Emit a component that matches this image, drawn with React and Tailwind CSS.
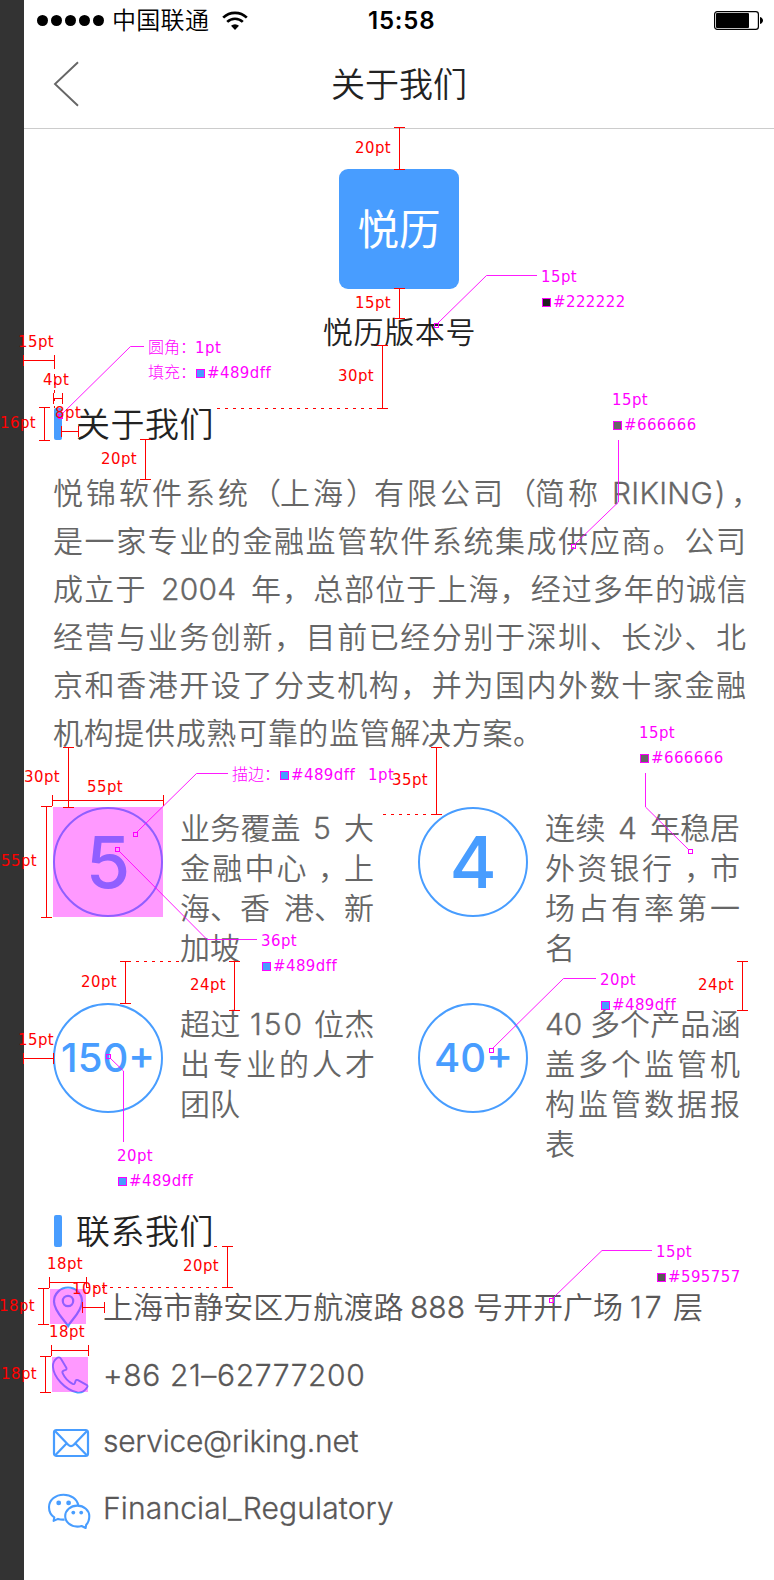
import React from "react";

/* ---------- text helpers ---------- */

// One line of body copy made of runs; each run is [classes, text].
function Line({ runs }) {
  return (
    <div className="flex whitespace-pre">
      {runs.map(([cls, text], i) => (
        <span key={i} className={"shrink-0 " + cls}>
          {text}
        </span>
      ))}
    </div>
  );
}

function StatusBar() {
  return (
    <div className="flex h-[41px] items-center text-black">
      <div className="ml-[13px] flex gap-[3px]">
        {[0, 1, 2, 3, 4].map((i) => (
          <span key={i} className="size-[11px] rounded-full bg-black" />
        ))}
      </div>
      <span className="ml-[8px] w-[98px] whitespace-nowrap pt-px text-[24px] font-[350] leading-none tracking-[0.3px]">中国联通</span>
      <svg className="ml-[12px] shrink-0" width="26" height="20" viewBox="0 0 26 20" fill="none" stroke="#000">
        <path d="M1.2 6.6A17 17 0 0 1 24.8 6.6" strokeWidth="2.7" />
        <path d="M5.2 10.9A11.2 11.2 0 0 1 20.8 10.9" strokeWidth="2.7" />
        <path d="M13 19L9 14.8A5.8 5.8 0 0 1 17 14.8Z" fill="#000" stroke="none" />
      </svg>
      <span className="ml-[120px] w-[70px] whitespace-nowrap pt-px text-[24px] font-semibold leading-none tracking-[0.8px]">15:58</span>
      <svg className="ml-[276px] shrink-0" width="50" height="19" viewBox="0 0 50 19">
        <rect x="0.6" y="0.6" width="43.8" height="17.8" rx="2.6" fill="none" stroke="#000" strokeWidth="1.2" />
        <rect x="2" y="2" width="33" height="15" rx="1" fill="#000" />
        <path d="M46 6c2 .6 3 2 3 3.500s-1 2.900-3 3.500z" fill="#000" />
      </svg>
    </div>
  );
}

function NavBar() {
  return (
    <div className="flex h-[88px] items-center border-b border-[#cccccc] text-[#222222]">
      <svg className="-mt-px ml-[29px]" width="26" height="48" viewBox="0 0 26 48" fill="none" stroke="#666" strokeWidth="1.9">
        <path d="M25 2.200L2 24L25 45.800" />
      </svg>
      <h1 className="ml-[252px] w-[137px] whitespace-nowrap text-[34px] font-[350] leading-none">关于我们</h1>
    </div>
  );
}

function SectionTitle({ children }) {
  return (
    <div className="flex h-[32px] items-center">
      <span className="ml-[1px] h-[32px] w-[8px] rounded-[2px] bg-[#489dff]" />
      <h2 className="ml-[14px] whitespace-nowrap pt-[2px] text-[34px] font-[350] leading-none tracking-[0.5px] text-[#222222]">{children}</h2>
    </div>
  );
}

const about = [
  [
    ["w-[198px] tracking-[3px]", "悦锦软件系统"],
    ["w-[29px]", "（"],
    ["w-[66px] tracking-[3px]", "上海"],
    ["w-[28px]", "）"],
    ["w-[132px] tracking-[3px]", "有限公司"],
    ["w-[29px]", "（"],
    ["w-[77px] tracking-[3px]", "简称"],
    ["w-[103px] tracking-[0.3px] [-webkit-text-stroke:0.3px]", "RIKING"],
    ["w-[16px] [-webkit-text-stroke:0.3px]", ")"],
    ["w-[15px]", "，"],
  ],
  [["tracking-[1.57px]", "是一家专业的金融监管软件系统集成供应商。公司"]],
  [
    ["w-[108px] tracking-[1.3px]", "成立于"],
    ["w-[90px] tracking-[0.3px] [-webkit-text-stroke:0.3px]", "2004"],
    ["tracking-[1.07px]", "年，总部位于上海，经过多年的诚信"],
  ],
  [["tracking-[1.57px]", "经营与业务创新，目前已经分别于深圳、长沙、北"]],
  [["tracking-[1.57px]", "京和香港开设了分支机构，并为国内外数十家金融"]],
  [["tracking-[0.67px]", "机构提供成熟可靠的监管解决方案。"]],
];

const stats = [
  {
    value: "5",
    size: "text-[72px]",
    lines: [
      [["w-[133px] tracking-[0.2px]", "业务覆盖"], ["w-[31px] [-webkit-text-stroke:0.3px]", "5"], ["", "大"]],
      [["w-[138px] tracking-[2.200px]", "金融中心"], ["w-[26px]", "，"], ["", "上"]],
      [["w-[60px]", "海、"], ["w-[44px]", "香"], ["w-[60px]", "港、"], ["", "新"]],
      [["", "加坡"]],
    ],
  },
  {
    value: "4",
    size: "text-[72px]",
    lines: [
      [["w-[73px] tracking-[0.6px]", "连续"], ["w-[32px] [-webkit-text-stroke:0.3px]", "4"], ["", "年稳居"]],
      [["w-[139px] tracking-[2.300px]", "外资银行"], ["w-[26px]", "，"], ["", "市"]],
      [["tracking-[3px]", "场占有率第一"]],
      [["", "名"]],
    ],
  },
  {
    value: "150+",
    size: "text-[40px]",
    lines: [
      [["w-[70px] tracking-[0.3px]", "超过"], ["w-[64px] tracking-[2px] [-webkit-text-stroke:0.3px]", "150"], ["tracking-[0.3px]", "位杰"]],
      [["tracking-[3px]", "出专业的人才"]],
      [["", "团队"]],
    ],
  },
  {
    value: "40+",
    size: "pl-[1px] text-[40px]",
    lines: [
      [["w-[45px] [-webkit-text-stroke:0.3px]", "40"], ["tracking-[0.1px]", "多个产品涵"]],
      [["tracking-[3px]", "盖多个监管机"]],
      [["tracking-[3px]", "构监管数据报"]],
      [["", "表"]],
    ],
  },
];

function Stat({ value, size, lines }) {
  return (
    <div className="flex h-[196px] w-[365px]">
      <div className="flex size-[110px] shrink-0 items-center justify-center rounded-full border-2 border-[#489dff]">
        <span className={"font-medium leading-none text-[#489dff] " + size}>{value}</span>
      </div>
      <div className="ml-[17px] mt-[1px] text-[30px] font-[350] leading-[40px] text-[#666666]">
        {lines.map((runs, i) => (
          <Line key={i} runs={runs} />
        ))}
      </div>
    </div>
  );
}

/* ---------- contact icons ---------- */

const PinIcon = () => (
  <svg width="44" height="44" viewBox="0 0 44 44" fill="none" stroke="#489dff" strokeWidth="2.200">
    <path d="M22 41.500C20 36 8 27 8 16.500a14 14 0 0 1 28 0C36 27 24 36 22 41.500Z" strokeLinejoin="round" />
    <circle cx="22" cy="16" r="5.200" />
  </svg>
);

const PhoneIcon = () => (
  <svg width="44" height="44" viewBox="0 0 44 44" fill="none" stroke="#489dff" strokeWidth="1.9" strokeLinejoin="round">
    <path d="M10.800 5.200C12 4 14 4 14.800 5.500L20.200 14.600C20.800 15.600 20.600 16.400 19.600 16.900L17.600 17.600C16.500 18.200 16.100 19 16.600 20.200C18.500 24.500 22.500 28.800 26.600 30.900C27.800 31.400 28.500 31.200 28.900 30L29.600 27.900C30 26.900 31 26.600 32 27.100L40.500 31.800C41.700 32.500 41.800 33.500 41 34.500C38.500 38.400 35 40 31.500 39.500C19 37 7.500 24 6.900 13.500C6.800 9.800 8.500 7 10.800 5.200Z" />
  </svg>
);

const MailIcon = () => (
  <svg width="44" height="44" viewBox="0 0 44 44" fill="none" stroke="#489dff" strokeWidth="2.200">
    <rect x="8" y="11" width="34" height="26" rx="2.500" />
    <path d="M9 12L22.200 25.800Q25 28.600 27.800 25.800L41 12M9 36.500L20.500 24.500M41 36.500L29.500 24.500" />
  </svg>
);

const ChatIcon = () => (
  <svg width="46" height="44" viewBox="0 0 46 44" fill="none" stroke="#489dff" strokeWidth="2.100" strokeLinejoin="round">
    <path d="M32.200 19.200C31.200 12.800 25 8.700 17.500 8.700C9.300 8.700 3 14.200 3 21.200C3 25.400 5 29.100 8.300 31.400L7.600 34.900L12 32.900C14 33.600 16.200 33.800 18.600 33.600" />
    <path d="M40.200 38.800L39.600 42L35.600 40C34.300 40.400 32.800 40.600 31.300 40.600C24.500 40.600 19.200 36 19.200 30.100C19.200 24.300 24.500 19.600 31.300 19.600C38 19.600 43.300 24.300 43.300 30.100C43.300 33.700 42.200 36.800 40.200 38.800Z" />
    <g fill="#489dff" stroke="none">
      <circle cx="12.700" cy="16.900" r="2.400" />
      <circle cx="22.600" cy="16.900" r="2.400" />
      <circle cx="27.300" cy="26.600" r="1.900" />
      <circle cx="35.200" cy="26.600" r="1.900" />
    </g>
  </svg>
);

function Contacts() {
  return (
    <div className="text-[30px] font-[350] leading-none text-[#595757]">
      <div className="flex h-[68px] items-center">
        <span className="-ml-[7px] w-[57px]"><PinIcon /></span>
        <Line runs={[["w-[307px] tracking-[0.050px]", "上海市静安区万航渡路"], ["w-[63px] [-webkit-text-stroke:0.3px]", "888"], ["w-[157px]", "号开开广场"], ["w-[43px] tracking-[3px] [-webkit-text-stroke:0.3px]", "17"], ["", "层"]]} />
      </div>
      <div className="flex h-[68px] items-center">
        <span className="-ml-[7px] w-[57px]"><PhoneIcon /></span>
        <Line runs={[["tracking-[0.620px] [-webkit-text-stroke:0.3px]", "+86 21–62777200"]]} />
      </div>
      <div className="flex h-[64px] items-center">
        <span className="-ml-[7px] w-[57px]"><MailIcon /></span>
        <Line runs={[["tracking-[-0.280px] [-webkit-text-stroke:0.3px]", "service@riking.net"]]} />
      </div>
      <div className="flex h-[70px] items-center">
        <span className="-ml-[7px] w-[57px]"><ChatIcon /></span>
        <Line runs={[["tracking-[0.150px] [-webkit-text-stroke:0.3px]", "Financial_Regulatory"]]} />
      </div>
    </div>
  );
}

/* ---------- spec annotations drawn over the screen ---------- */

// Vertical measures: [x, y1, y2]
const vertical = [
  [399, 127, 169], [399, 288, 318], [382, 345, 408], [44, 407, 440], [145, 439, 479],
  [68, 747, 807], [46, 806, 917], [436, 747, 814], [125, 961, 1003], [234, 961, 1010],
  [742, 961, 1010], [227, 1246, 1287], [43, 1288, 1324], [45, 1356, 1392],
];
// Horizontal measures: [y, x1, x2]
const horizontal = [
  [360, 23, 54], [398, 53, 62], [431, 61, 78], [800, 52, 163], [1058, 23, 53],
  [1282, 49, 86], [1307, 82, 104], [1350, 51, 88],
];
const dashed = [
  "M217 408.500H382", "M54.500 366V408", "M383 814.500H436", "M136 961.500H181", "M214 1246.500H222", "M86 1287.500H227",
];
// Callouts: target marker and the elbow line to its label
const callouts = [
  { at: [436, 325], d: "M438 323L486.500 275.500H537" },
  { at: [60, 416], d: "M62 414L130.500 346.500H144" },
  { at: [573, 546], d: "M575 544L618.500 502V440" },
  { at: [690, 851], d: "M688 849L645.500 807V773" },
  { at: [135, 834], d: "M137 832L196.500 773.500H228" },
  { at: [117, 849], d: "M119 851L207 939.500H257" },
  { at: [491, 1050], d: "M493 1048L563.500 978.500H596" },
  { at: [108, 1056], d: "M110 1058L123.500 1071V1142" },
  { at: [551, 1300], d: "M553 1298L602 1250.500H652" },
];

const redNotes = [
  ["left-[355px] top-[138px]", "20pt"],
  ["left-[355px] top-[293px]", "15pt"],
  ["left-[338px] top-[366px]", "30pt"],
  ["left-[18px] top-[332px]", "15pt"],
  ["left-[43px] top-[370px]", "4pt"],
  ["left-[55px] top-[403px]", "8pt"],
  ["left-[0px] top-[413px]", "16pt"],
  ["left-[101px] top-[449px]", "20pt"],
  ["left-[24px] top-[767px]", "30pt"],
  ["left-[87px] top-[777px]", "55pt"],
  ["left-[1px] top-[851px]", "55pt"],
  ["left-[392px] top-[770px]", "35pt"],
  ["left-[81px] top-[972px]", "20pt"],
  ["left-[190px] top-[975px]", "24pt"],
  ["left-[698px] top-[975px]", "24pt"],
  ["left-[18px] top-[1030px]", "15pt"],
  ["left-[183px] top-[1256px]", "20pt"],
  ["left-[47px] top-[1254px]", "18pt"],
  ["left-[-1px] top-[1296px]", "18pt"],
  ["left-[72px] top-[1279px]", "10pt"],
  ["left-[49px] top-[1322px]", "18pt"],
  ["left-[1px] top-[1364px]", "18pt"],
];

const pinkNotes = [
  ["left-[541px] top-[267px]", "15pt"],
  ["left-[612px] top-[390px]", "15pt"],
  ["left-[639px] top-[723px]", "15pt"],
  ["left-[261px] top-[931px]", "36pt"],
  ["left-[600px] top-[970px]", "20pt"],
  ["left-[117px] top-[1146px]", "20pt"],
  ["left-[656px] top-[1242px]", "15pt"],
  ["left-[195px] top-[338px]", "1pt"],
  ["left-[368px] top-[765px]", "1pt"],
];

const cjkNotes = [
  ["left-[148px] top-[338px]", "圆角："],
  ["left-[148px] top-[363px]", "填充："],
  ["left-[232px] top-[765px]", "描边："],
];

const swatches = [
  ["left-[542px] top-[292px]", "bg-[#222222]", "#222222"],
  ["left-[196px] top-[363px]", "bg-[#489dff]", "#489dff"],
  ["left-[613px] top-[415px]", "bg-[#666666]", "#666666"],
  ["left-[640px] top-[748px]", "bg-[#666666]", "#666666"],
  ["left-[280px] top-[765px]", "bg-[#489dff]", "#489dff"],
  ["left-[262px] top-[956px]", "bg-[#489dff]", "#489dff"],
  ["left-[601px] top-[995px]", "bg-[#489dff]", "#489dff"],
  ["left-[118px] top-[1171px]", "bg-[#489dff]", "#489dff"],
  ["left-[657px] top-[1267px]", "bg-[#595757]", "#595757"],
];

function Annotations() {
  return (
    <div className="absolute inset-0 overflow-hidden whitespace-nowrap font-['DejaVu_Sans_Condensed','Noto_Sans','Noto_Sans_CJK_SC',sans-serif] text-[16.600px] leading-[20px] tracking-[0.45px]">
      <svg className="absolute inset-0" width="774" height="1580" viewBox="0 0 774 1580" fill="none">
        <g fill="#ff00ff" fillOpacity="0.4">
          <rect x="53" y="807" width="110" height="110" />
          <rect x="50" y="1289" width="36" height="35" />
          <rect x="52" y="1357" width="36" height="35" />
        </g>
        <g stroke="#ff0000" shapeRendering="crispEdges">
          {vertical.map(([x, a, b]) => (
            <path key={x + "-" + a} d={`M${x + 0.5} ${a}V${b}M${x - 5} ${a + 0.5}h11M${x - 5} ${b + 0.5}h11`} />
          ))}
          {horizontal.map(([y, a, b]) => (
            <path key={y} d={`M${a} ${y + 0.5}H${b}M${a + 0.5} ${y - 5}v11M${b + 0.5} ${y - 5}v11`} />
          ))}
          {dashed.map((d) => (
            <path key={d} d={d} strokeDasharray="3 5" />
          ))}
        </g>
        <g stroke="#ff00ff">
          {callouts.map(({ at: [x, y], d }) => (
            <g key={d}>
              <path d={d} strokeWidth="0.9" />
              <rect x={x - 2 + 0.5} y={y - 2 + 0.5} width="4" height="4" />
            </g>
          ))}
        </g>
      </svg>
      {redNotes.map(([cls, text]) => (
        <span key={cls} className={"absolute text-[#ff0000] " + cls}>{text}</span>
      ))}
      {pinkNotes.map(([cls, text]) => (
        <span key={cls} className={"absolute text-[#ff00ff] " + cls}>{text}</span>
      ))}
      {cjkNotes.map(([cls, text]) => (
        <span key={cls} className={"absolute text-[16px] font-light tracking-normal text-[#ff00ff] " + cls}>{text}</span>
      ))}
      {swatches.map(([cls, color, text]) => (
        <span key={cls} className={"absolute flex items-center text-[#ff00ff] " + cls}>
          <span className={"mr-[2px] size-[9px] border border-[#ff00ff] " + color} />
          {text}
        </span>
      ))}
    </div>
  );
}

export default function App() {
  return (
    <div className="relative flex h-[1580px] w-[774px] overflow-hidden bg-white font-['Inter','Noto_Sans_CJK_SC',sans-serif]">
      <aside className="w-[24px] shrink-0 bg-[#333333]" />
      <main className="w-[750px] shrink-0">
        <StatusBar />
        <NavBar />
        <div className="flex flex-col items-center pt-[40px]">
          <div className="flex size-[120px] items-center justify-center rounded-[9px] bg-[#489dff] pt-[4px] text-[41.500px] leading-none text-white">悦历</div>
          <p className="mt-[23px] h-[40px] pl-px text-[30px] font-[350] leading-[40px] tracking-[0.7px] text-[#222222]">悦历版本号</p>
        </div>
        <section className="pl-[29px] pt-[56px]">
          <SectionTitle>关于我们</SectionTitle>
          <div className="mt-[29px] text-[30px] font-[350] leading-[48px] text-[#666666]">
            {about.map((runs, i) => (
              <Line key={i} runs={runs} />
            ))}
          </div>
          <div className="mt-[50px] grid grid-cols-[365px_365px]">
            {stats.map((s) => (
              <Stat key={s.value} {...s} />
            ))}
          </div>
        </section>
        <section className="pl-[29px] pt-[16px]">
          <SectionTitle>联系我们</SectionTitle>
          <div className="mt-[26px]">
            <Contacts />
          </div>
        </section>
      </main>
      <Annotations />
    </div>
  );
}
